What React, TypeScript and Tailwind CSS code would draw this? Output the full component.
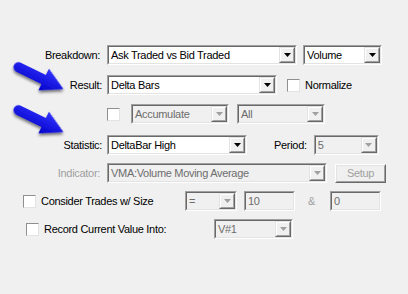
import React from 'react';

const font = { fontFamily: '"Liberation Sans", Arial, sans-serif' };

const Arrow = ({ className }: { className: string }) => (
  <svg className={className} width="64" height="44" viewBox="0 0 64 44">
    <defs>
      <linearGradient id="ab" x1="0" y1="0" x2="0" y2="1">
        <stop offset="0" stopColor="#3434ff" />
        <stop offset="1" stopColor="#0000c8" />
      </linearGradient>
      <filter id="sh" x="-20%" y="-20%" width="140%" height="160%">
        <feDropShadow dx="1" dy="2" stdDeviation="1.4" floodColor="#000" floodOpacity="0.55" />
      </filter>
    </defs>
    <path
      d="M5 -5 L33 -5 L33 -12 L55 0 L33 12 L33 5 L5 5 A5 5 0 0 1 5 -5 Z"
      fill="url(#ab)"
      filter="url(#sh)"
      transform="translate(4 8) rotate(26)"
    />
  </svg>
);

const Sunken = ({ className, children, disabled }: { className: string; children?: React.ReactNode; disabled?: boolean }) => (
  <div className={`shrink-0 border border-t-[#a0a0a0] border-l-[#a0a0a0] border-b-white border-r-white ${className}`}>
    <div
      className={`flex h-full items-center border border-t-[#696969] border-l-[#696969] border-b-[#e3e3e3] border-r-[#e3e3e3] ${
        disabled ? 'bg-[#f0f0f0]' : 'bg-white'
      }`}
    >
      {children}
    </div>
  </div>
);

const Combo = ({ className, text, disabled }: { className: string; text: string; disabled?: boolean }) => (
  <Sunken className={`h-[20px] ${className}`} disabled={disabled}>
    <span className={`flex-1 truncate pl-[2px] ${disabled ? 'text-[#6d6d6d]' : 'text-black'}`}>{text}</span>
    <div className="h-full w-[16px] border border-t-[#e3e3e3] border-l-[#e3e3e3] border-b-[#696969] border-r-[#696969] bg-[#f0f0f0]">
      <div className="flex h-full items-center justify-center border border-t-white border-l-white border-b-[#a0a0a0] border-r-[#a0a0a0]">
        <svg width="7" height="4" viewBox="0 0 7 4">
          <path d="M0 0 H7 L3.5 4 Z" fill={disabled ? '#a0a0a0' : '#000'} />
        </svg>
      </div>
    </div>
  </Sunken>
);

const Check = ({ className = '' }: { className?: string }) => (
  <div className={`h-[13px] w-[13px] shrink-0 border border-t-[#8f8f8f] border-l-[#8f8f8f] border-b-[#e3e3e3] border-r-[#e3e3e3] bg-white ${className}`} />
);

const Label = ({ children, className = '' }: { children: React.ReactNode; className?: string }) => (
  <div className={`w-[105px] shrink-0 pr-[3px] text-right ${className}`}>{children}</div>
);

export default function App() {
  return (
    <div
      className="relative h-[294px] w-[408px] overflow-hidden bg-[#f0f0f0] pt-[45px] text-[11px] tracking-[-0.3px] text-black"
      style={font}
    >
      <Arrow className="absolute left-[10px] top-[57px]" />
      <Arrow className="absolute left-[10px] top-[100px]" />

      {/* Breakdown */}
      <div className="flex h-[20px] items-center">
        <Label className="pr-[5px]">Breakdown:</Label>
        <Combo className="ml-[2px] w-[190px]" text="Ask Traded vs Bid Traded" />
        <Combo className="ml-[6px] w-[79px]" text="Volume" />
      </div>

      {/* Result */}
      <div className="mt-[10px] flex h-[20px] items-center">
        <Label className="pr-[3px]">Result:</Label>
        <Combo className="ml-[2px] w-[170px]" text="Delta Bars" />
        <Check className="ml-[10px]" />
        <span className="ml-[5px]">Normalize</span>
      </div>

      {/* Accumulate */}
      <div className="mt-[9px] flex h-[20px] items-center">
        <div className="w-[107px] shrink-0" />
        <Check />
        <Combo className="ml-[11px] w-[98px]" text="Accumulate" disabled />
        <Combo className="ml-[8px] w-[88px]" text="All" disabled />
      </div>

      {/* Statistic */}
      <div className="mt-[11px] flex h-[20px] items-center">
        <Label className="pr-[3px]">Statistic:</Label>
        <Combo className="ml-[2px] w-[140px]" text="DeltaBar High" />
        <span className="ml-[27px]">Period:</span>
        <Combo className="ml-[7px] w-[65px]" text="5" disabled />
      </div>

      {/* Indicator */}
      <div className="mt-[8px] flex h-[20px] items-center">
        <Label className="pr-[5px] text-[#a0a0a0]">Indicator:</Label>
        <Combo className="ml-[2px] w-[220px]" text="VMA:Volume Moving Average" disabled />
        <div className="ml-[8px] h-[19px] w-[51px] border border-t-white border-l-white border-b-[#696969] border-r-[#696969]">
          <div className="flex h-full items-center justify-center border border-t-[#e3e3e3] border-l-[#e3e3e3] border-b-[#a0a0a0] border-r-[#a0a0a0] text-[#a0a0a0]">
            Setup
          </div>
        </div>
      </div>

      {/* Consider trades */}
      <div className="mt-[8px] flex h-[20px] items-center">
        <Check className="ml-[23px]" />
        <span className="ml-[5px] w-[144px] shrink-0">Consider Trades w/ Size</span>
        <Combo className="w-[52px]" text="=" disabled />
        <Sunken className="ml-[7px] h-[20px] w-[51px]" disabled>
          <span className="pl-[2px] text-[#6d6d6d]">10</span>
        </Sunken>
        <span className="ml-[13px] w-[22px] shrink-0 text-[#a0a0a0]">&amp;</span>
        <Sunken className="h-[20px] w-[51px]" disabled>
          <span className="pl-[2px] text-[#6d6d6d]">0</span>
        </Sunken>
      </div>

      {/* Record */}
      <div className="mt-[8px] flex h-[20px] items-center">
        <Check className="ml-[26px]" />
        <span className="ml-[5px] w-[170px] shrink-0">Record Current Value Into:</span>
        <Combo className="ml-[0px] w-[79px]" text="V#1" disabled />
      </div>
    </div>
  );
}
